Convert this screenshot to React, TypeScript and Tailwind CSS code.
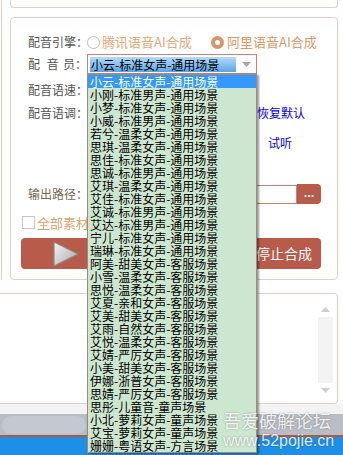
import React from 'react';

const voices = [
  '小云-标准女声-通用场景',
  '小刚-标准男声-通用场景',
  '小梦-标准女声-通用场景',
  '小威-标准男声-通用场景',
  '若兮-温柔女声-通用场景',
  '思琪-温柔女声-通用场景',
  '思佳-标准女声-通用场景',
  '思诚-标准男声-通用场景',
  '艾琪-温柔女声-通用场景',
  '艾佳-标准女声-通用场景',
  '艾诚-标准男声-通用场景',
  '艾达-标准男声-通用场景',
  '宁儿-标准女声-通用场景',
  '瑞琳-标准女声-通用场景',
  '阿美-甜美女声-客服场景',
  '小雪-温柔女声-客服场景',
  '思悦-温柔女声-客服场景',
  '艾夏-亲和女声-客服场景',
  '艾美-甜美女声-客服场景',
  '艾雨-自然女声-客服场景',
  '艾悦-温柔女声-客服场景',
  '艾婧-严厉女声-客服场景',
  '小美-甜美女声-客服场景',
  '伊娜-浙普女声-客服场景',
  '思婧-严厉女声-客服场景',
  '思彤-儿童音-童声场景',
  '小北-萝莉女声-童声场景',
  '艾宝-萝莉女声-童声场景',
  '姗姗-粤语女声-方言场景',
];

const font = { fontFamily: '"Noto Sans CJK SC", "Noto Sans", sans-serif' };

const Label: React.FC<{ children: React.ReactNode; brown?: boolean }> = ({ children, brown }) => (
  <div
    className={`w-[66px] shrink-0 whitespace-nowrap pl-[7px] text-[12px] ${
      brown ? 'text-[#7a6650]' : 'text-[#555555]'
    }`}
  >
    {children}
  </div>
);

const PlayIcon = () => (
  <svg width="28" height="28" viewBox="0 0 28 28">
    <defs>
      <linearGradient id="pg" x1="0" y1="0" x2="1" y2="1">
        <stop offset="0" stopColor="#f4f4f4" />
        <stop offset="1" stopColor="#a9a9a9" />
      </linearGradient>
    </defs>
    <path d="M2 2 L26 14 L2 26 Z" fill="url(#pg)" stroke="#8a8a8a" strokeWidth="1.2" strokeLinejoin="round" />
  </svg>
);

export default function App() {
  return (
    <div className="relative w-[343px] h-[455px] overflow-hidden bg-white" style={font}>
      {/* upper group */}
      <div className="ml-px h-[280px] border-l border-[#e8cfc6] pl-[8px]">
        <div className="h-[8px] w-[328px] rounded-b border-x border-b border-[#e8cfc6]" />
        <div className="mt-[9px] flex h-[263px] w-[328px] flex-col rounded border border-[#e8cfc6] pl-[10px]">
          {/* engine */}
          <div className="mt-[14px] flex h-[20px] items-center">
            <Label>配音引擎：</Label>
            <div className="flex w-[124px] items-center">
              <span className="h-[13px] w-[13px] rounded-full border border-[#bdbdbd] bg-white" />
              <span className="ml-[2px] whitespace-nowrap text-[13px] text-[#e8a878]">腾讯语音AI合成</span>
            </div>
            <div className="flex items-center">
              <span className="h-[13px] w-[13px] rounded-full border-[4px] border-[#d8956a] bg-white" />
              <span className="ml-[3px] whitespace-nowrap text-[13px] text-[#e29866]">阿里语音AI合成</span>
            </div>
          </div>
          {/* voice */}
          <div className="mt-[2px] flex h-[20px] items-center">
            <div className="flex w-[66px] shrink-0 pl-[7px] text-[12px] text-[#555555]">
              <span className="w-[23px]">配</span>
              <span className="w-[20px]">音</span>
              <span className="whitespace-nowrap">员：</span>
            </div>
            <div className="flex h-[20px] w-[170px] items-center border border-[#c8827a] bg-white pl-[2px]">
              <span className="h-[15px] w-[146px] whitespace-nowrap bg-gradient-to-b from-[#b4dcfa] to-[#5aa4e4] pl-[1px] text-[12px] leading-[15px] text-black">
                小云-标准女声-通用场景
              </span>
              <svg className="ml-[6px]" width="9" height="5" viewBox="0 0 9 5">
                <path d="M0 0 L9 0 L4.5 5 Z" fill="#a8a8a8" />
              </svg>
            </div>
          </div>
          {/* speed */}
          <div className="mt-[6px] flex h-[20px] items-center">
            <Label>配音语速：</Label>
          </div>
          {/* tone */}
          <div className="mt-[3px] flex h-[20px] items-center">
            <Label>配音语调：</Label>
            <span className="ml-[170px] whitespace-nowrap text-[12px] text-[#0000ff]">恢复默认</span>
          </div>
          {/* listen */}
          <div className="mt-[10px] flex h-[20px] items-center">
            <span className="ml-[247px] text-[12px] text-[#0000ff]">试听</span>
          </div>
          {/* output */}
          <div className="mt-[31px] flex h-[20px] items-center">
            <Label brown>输出路径：</Label>
            <div className="h-[19px] w-[210px] border border-[#c8827a] bg-white" />
            <div className="flex h-[20px] w-[24px] items-center justify-center rounded-r bg-[#b95b4a] pb-[4px] text-[11px] font-bold text-white">
              ...
            </div>
          </div>
          {/* all */}
          <div className="mt-[9px] flex h-[19px] items-center">
            <span className="ml-px h-[13px] w-[13px] border border-[#c8c8c8] bg-white" />
            <span className="ml-[2px] whitespace-nowrap text-[13px] text-[#e4a070]">全部素材</span>
          </div>
          {/* buttons */}
          <div className="mt-[6px] flex h-[31px] items-stretch">
            <div className="flex w-[220px] items-center rounded bg-[#b95b4a] pl-[31px]">
              <PlayIcon />
            </div>
            <div className="ml-[6px] flex w-[74px] items-center justify-center whitespace-nowrap rounded bg-[#b95b4a] text-[14px] text-white">
              停止合成
            </div>
          </div>
        </div>
      </div>

      {/* log panel */}
      <div className="mt-[13px] flex h-[111px] w-[338px] justify-end rounded-r border-y border-r border-[#e8cfc6] pr-[4px]">
        <div className="flex w-[15px] flex-col items-center pt-[13px]">
          <svg width="9" height="5" viewBox="0 0 9 5">
            <path d="M4.5 0 L9 5 L0 5 Z" fill="#cfcfcf" />
          </svg>
          <div className="mt-[5px] h-[66px] w-[15px] bg-[#f3f3f3]" />
          <svg className="mt-[5px]" width="9" height="5" viewBox="0 0 9 5">
            <path d="M0 0 L9 0 L4.5 5 Z" fill="#cfcfcf" />
          </svg>
        </div>
      </div>

      {/* bottom strips */}
      <div className="h-[10px] bg-[#f3f3f3]" />
      <div className="flex h-[21px] items-center bg-[#b9bdc5]">
        <div className="ml-[2px] h-[18px] w-[84px] rounded-full bg-[#c4c8d0]" />
        <div className="h-[21px] w-[40px] bg-[#aeb2ba]" />
      </div>
      <div className="h-[2px] bg-[#b05a40]" />
      <div className="h-[18px] bg-[#1e8fe6]" />

      {/* open dropdown list */}
      <div className="absolute left-[87px] top-[74px] w-[170px] border border-[#9a8a80] bg-[#cde6cf] shadow-[2px_1px_2px_rgba(0,0,0,0.4)]">
        {voices.map((v, i) => (
          <div
            key={v}
            className={`h-[13px] whitespace-nowrap pl-[2px] text-[12px] leading-[13px] ${
              i === 0 ? 'bg-[#3399ff] text-white' : 'text-black'
            }`}
          >
            {v}
          </div>
        ))}
      </div>

      {/* watermark */}
      <div className="pointer-events-none absolute left-[223px] top-[409px] flex flex-col text-white/85 [text-shadow:0_0_2px_rgba(0,0,0,0.35)]">
        <span className="whitespace-nowrap text-[18px] leading-[22px]">吾爱破解论坛</span>
        <span
          className="whitespace-nowrap text-[16px] leading-[20px]"
          style={{ fontFamily: '"Liberation Sans", sans-serif' }}
        >
          www.52pojie.cn
        </span>
      </div>
    </div>
  );
}
